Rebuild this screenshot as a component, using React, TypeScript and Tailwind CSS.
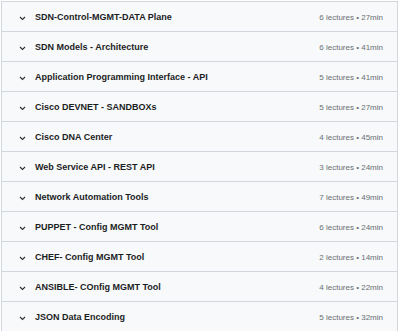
import React from "react";

const rows: [string, string][] = [
  ["SDN-Control-MGMT-DATA Plane", "6 lectures • 27min"],
  ["SDN Models - Architecture", "6 lectures • 41min"],
  ["Application Programming Interface - API", "5 lectures • 41min"],
  ["Cisco DEVNET - SANDBOXs", "5 lectures • 27min"],
  ["Cisco DNA Center", "4 lectures • 45min"],
  ["Web Service API - REST API", "3 lectures • 24min"],
  ["Network Automation Tools", "7 lectures • 49min"],
  ["PUPPET - Config MGMT Tool", "6 lectures • 24min"],
  ["CHEF- Config MGMT Tool", "2 lectures • 14min"],
  ["ANSIBLE- COnfig MGMT Tool", "4 lectures • 22min"],
  ["JSON Data Encoding", "5 lectures • 32min"],
];

export default function App() {
  return (
    <div className="w-[400px] h-[332px] overflow-hidden bg-white pt-[1px] px-[1px]" style={{ fontFamily: '"Liberation Sans", Arial, sans-serif' }}>
      <div className="border-l border-r border-[#d1d7dc] w-[397px]">
        {rows.map(([t, m], i) => (
          <div key={i} className="h-[30px] border-t border-[#d1d7dc] bg-[#f7f9fa] flex items-center pl-[17px] pr-[14px] pt-[3px]">
            <svg width="7" height="5" viewBox="0 0 7 5" className="mr-[9px]">
              <path d="M1 1 L3.5 3.5 L6 1" fill="none" stroke="#2d2f31" strokeWidth="1.1" />
            </svg>
            <span className="text-[9px] font-bold text-[#1c1d1f] flex-1">{t}</span>
            <span className="text-[8px] text-[#6a6f73]">{m}</span>
          </div>
        ))}
      </div>
    </div>
  );
}
